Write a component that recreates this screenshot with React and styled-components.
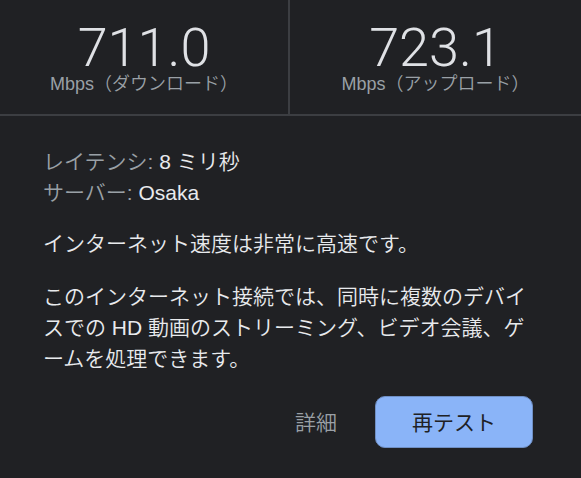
import React from "react";
import styled, { createGlobalStyle } from "styled-components";

const Global = createGlobalStyle`
  html, body { margin: 0; padding: 0; background: #202124; }
  body { font-family: "Liberation Sans", "Noto Sans CJK JP", sans-serif; }
`;

const Page = styled.div`
  width: 581px;
  height: 478px;
  background: #202124;
  display: flex;
  flex-direction: column;
  overflow: hidden;
`;

const Stats = styled.div`
  display: grid;
  grid-template-columns: 290px 1fr;
  height: 116px;
  border-bottom: 2px solid #3c3e42;
  box-sizing: border-box;
`;

const Stat = styled.div`
  display: flex;
  flex-direction: column;
  align-items: center;
  padding-top: 25px;
  border-right: ${(p) => (p.$divider ? "2px solid #3c3e42" : "none")};
`;

const Number = styled.div`
  font-family: Roboto, "Liberation Sans", sans-serif;
  font-weight: 300;
  font-size: 54px;
  line-height: 46px;
  color: #dfe1e5;
`;

const Unit = styled.div`
  font-family: "Liberation Sans", "Noto Sans CJK JP", sans-serif;
  font-weight: 350;
  font-size: 18px;
  line-height: 18px;
  margin-top: 4px;
  color: #9aa0a6;
`;

const Body = styled.div`
  padding: 30px 43px 0 43px;
  display: flex;
  flex-direction: column;
  font-size: 21px;
  font-weight: 350;
  line-height: 31px;
  color: #e8eaed;
`;

const InfoLine = styled.div`
  white-space: nowrap;
`;

const Key = styled.span`
  color: #9aa0a6;
`;

const Para = styled.p`
  margin: ${(p) => p.$mt}px 0 0 0;
`;

const Actions = styled.div`
  display: flex;
  justify-content: flex-end;
  align-items: center;
  gap: 38px;
  margin-top: 22px;
  padding-right: 5px;
`;

const TextButton = styled.button`
  background: none;
  border: none;
  padding: 0;
  font: inherit;
  font-size: 21px;
  font-weight: 350;
  color: #9aa0a6;
`;

const PrimaryButton = styled.button`
  width: 158px;
  height: 52px;
  box-sizing: border-box;
  border-radius: 10px;
  border: 1px solid #6f8fc4;
  background: #8ab4f8;
  color: #202124;
  font: inherit;
  font-size: 21px;
  font-weight: 400;
  display: flex;
  align-items: center;
  justify-content: center;
`;

export default function App() {
  return (
    <Page>
      <Global />
      <Stats>
        <Stat $divider>
          <Number>711.0</Number>
          <Unit>Mbps（ダウンロード）</Unit>
        </Stat>
        <Stat>
          <Number>723.1</Number>
          <Unit>Mbps（アップロード）</Unit>
        </Stat>
      </Stats>
      <Body>
        <div>
          <InfoLine>
            <Key>レイテンシ:</Key> 8 ミリ秒
          </InfoLine>
          <InfoLine>
            <Key>サーバー:</Key> Osaka
          </InfoLine>
        </div>
        <Para $mt={20}>インターネット速度は非常に高速です。</Para>
        <Para $mt={22}>
          このインターネット接続では、同時に複数のデバイスでの HD 動画のストリーミング、ビデオ会議、ゲームを処理できます。
        </Para>
        <Actions>
          <TextButton>詳細</TextButton>
          <PrimaryButton>再テスト</PrimaryButton>
        </Actions>
      </Body>
    </Page>
  );
}
